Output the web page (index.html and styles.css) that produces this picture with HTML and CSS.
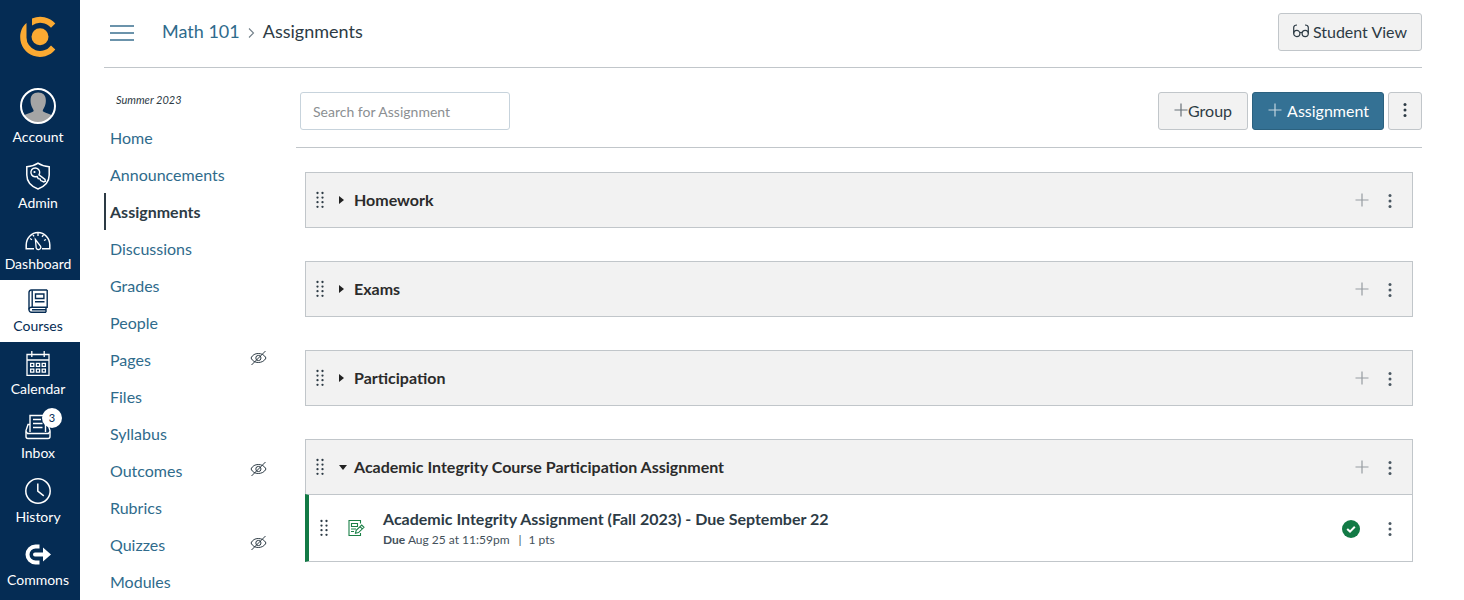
FILE: index.html
```html
<!DOCTYPE html>
<html lang="en">
    <head>
        <meta charset="UTF-8" />
        <meta name="viewport" content="width=device-width, initial-scale=1.0" />
        <title>Assignments</title>
        <link rel="stylesheet" href="styles.css">
    </head>
    <body>
        <!-- shared icons -->
        <svg class="sprite" aria-hidden="true">
            <symbol id="drag" viewBox="0 0 8 18">
                <g fill="#2d3b45">
                    <circle cx="1.5" cy="2" r="1.15" /><circle cx="6.5" cy="2" r="1.15" />
                    <circle cx="1.5" cy="6.6" r="1.15" /><circle cx="6.5" cy="6.6" r="1.15" />
                    <circle cx="1.5" cy="11.2" r="1.15" /><circle cx="6.5" cy="11.2" r="1.15" />
                    <circle cx="1.5" cy="15.8" r="1.15" /><circle cx="6.5" cy="15.8" r="1.15" />
                </g>
            </symbol>
            <symbol id="plus" viewBox="0 0 14 14">
                <path d="M7 .5v13M.5 7h13" fill="none" stroke="currentColor" stroke-width="1.2" />
            </symbol>
            <symbol id="more" viewBox="0 0 4 16">
                <circle cx="2" cy="2.4" r="1.5" fill="currentColor" />
                <circle cx="2" cy="8" r="1.5" fill="currentColor" />
                <circle cx="2" cy="13.6" r="1.5" fill="currentColor" />
            </symbol>
            <symbol id="hidden" viewBox="0 0 17 16">
                <g fill="none" stroke="#2d3b45" stroke-width="1">
                    <path d="M1 8C2.500 4.800 5.300 3.500 8.300 3.500S14.500 4.800 16 8C14.500 11.200 11.300 12.500 8.300 12.500S2.500 11.200 1 8z" />
                    <circle cx="8.400" cy="8" r="2.600" />
                    <path d="M1.500 15L15.500 1" />
                </g>
            </symbol>
        </svg>

        <div class="app">
            <nav class="global-nav" aria-label="Global">
                <a class="logo" href="#" aria-label="Home page">
                    <svg width="38" height="42" viewBox="0 0 38 42">
                        <circle cx="21" cy="20.700" r="8.500" fill="#fcaa32" />
                        <path d="M13 2.500A20 20 0 0 1 36.300 7.500L32 11.800A14 14 0 0 0 13 9.500z" fill="#fcaa32" />
                        <path d="M7.500 7V21A13.600 13.600 0 0 0 32 29.500L36.300 33.500A19.700 19.700 0 0 1 1.200 21C1.200 15.500 3.500 10 7.500 7z" fill="#fcaa32" />
                    </svg>
                </a>
                <ul>
                    <li><a href="#">
                        <svg width="36" height="36" viewBox="0 0 36 36">
                            <circle cx="18" cy="18" r="17" fill="#052c54" />
                            <path d="M4 27.500C6.500 25.300 12 24.800 13.500 23.200C14.300 22 11.500 20 10.800 15.500C9.600 8.500 12.500 4.500 18.200 4.500S26.800 8.500 25.600 15.500C24.900 20 22.100 22 22.900 23.200C24.400 24.800 29.500 25.300 32 27.500A17 17 0 0 1 4 27.500z" fill="#a5a5a5" />
                            <circle cx="18" cy="18" r="17" fill="none" stroke="#fff" stroke-width="2" />
                        </svg>
                        Account</a></li>
                    <li><a href="#">
                        <svg width="26" height="28" viewBox="0 0 26 28" fill="none" stroke="#fff" stroke-width="1.500">
                            <path d="M13 1.200C16 3.300 20 4.500 24.200 4.800V13C24.200 19.500 19.500 24.500 13 27C6.500 24.500 1.800 19.500 1.800 13V4.800C6 4.500 10 3.300 13 1.200z" />
                            <path d="M14 12.800A4.400 4.400 0 1 0 10 14.800L12.200 14.600L13.200 16.600L15 16.800L15.700 18.600L18.800 20L20.300 19.400L20 17.400z" stroke-width="1.400" />
                            <circle cx="9.500" cy="10" r="1.100" fill="#fff" stroke="none" />
                        </svg>
                        Admin</a></li>
                    <li><a href="#">
                        <svg width="26" height="23" viewBox="0 0 26 23" fill="none" stroke="#fff" stroke-width="1.500">
                            <path d="M9 20.800H1.200V17A11.800 12.500 0 0 1 24.800 17V20.800H17" />
                            <path d="M10.400 11.500L15.600 18.400A2.300 2.300 0 0 1 11.200 20z" stroke-width="1.300" />
                            <path d="M13 5v3M5 10.500l2 1.200M8 6.800l1 1.600M18.500 7l-1.500 1.700M21 11.500l-2 1" stroke-width="1.300" />
                        </svg>
                        Dashboard</a></li>
                    <li class="active"><a href="#">
                        <svg width="20" height="24" viewBox="0 0 20 24" fill="none" stroke="#052c54" stroke-width="1.400">
                            <path d="M19.200 1H3.500A2.600 2.600 0 0 0 1 3.600V20.600A2.500 2.500 0 0 0 3.500 23.200H18" />
                            <path d="M19.200 1V18.200H3.500A2.400 2.400 0 0 0 1 20.600M4.200 1.200V18M18 18.200V23.200M4 20.700H18" />
                            <path d="M7.500 5h8.400v4.500H7.500zM7 12.700h9.500" />
                        </svg>
                        Courses</a></li>
                    <li><a href="#">
                        <svg width="24" height="25" viewBox="0 0 24 25" fill="none" stroke="#fff" stroke-width="1.300">
                            <path d="M1 3.500H23V24.300H1zM1 9H23M5.800 0V6M18.200 0V6" />
                            <path d="M4.600 12.300h3.200v3H4.600zM10.400 12.300h3.200v3h-3.200zM16.200 12.300h3.200v3h-3.200zM4.600 18.200h3.200v3H4.600zM10.400 18.200h3.200v3h-3.200zM16.200 18.200h3.200v3h-3.200z" />
                        </svg>
                        Calendar</a></li>
                    <li><a href="#">
                        <svg width="26" height="26" viewBox="0 0 26 26" fill="none" stroke="#fff" stroke-width="1.400">
                            <path d="M5 18V1.500H20.500V18M8 5.500H16M8 9.500H17.500M8 13.500H17.500" />
                            <path d="M5 10.500H3L1 16.500V22.500A2 2 0 0 0 3 24.500H23A2 2 0 0 0 25 22.500V16.500L23 10.500H20.500" />
                            <path d="M1 17.500L2.500 19.500H23.500L25 17.500" />
                        </svg>
                        Inbox
                        <span class="badge">3</span></a></li>
                    <li><a href="#">
                        <svg width="26" height="26" viewBox="0 0 26 26" fill="none" stroke="#fff" stroke-width="1.500">
                            <circle cx="13" cy="13" r="12.200" />
                            <path d="M12.800 5.500V13.200L18.800 17.800" />
                        </svg>
                        History</a></li>
                    <li><a href="#">
                        <svg width="26" height="25" viewBox="0 0 26 25">
                            <path d="M14.500 4.500H10.500A7.800 7.800 0 0 0 10.500 20.500H14.500" fill="none" stroke="#fff" stroke-width="4" />
                            <path d="M10 10.500h8V5.500l8 7-8 7v-5h-8a2 2 0 0 1 0-4z" fill="#fff" />
                        </svg>
                        Commons</a></li>
                </ul>
            </nav>

            <div class="page">
                <header class="top">
                    <button class="menu-toggle" type="button" aria-label="Course menu">
                        <svg width="24" height="18" viewBox="0 0 24 18"><path d="M0 2h24M0 9h24M0 16h24" stroke="#6b93ab" stroke-width="2" /></svg>
                    </button>
                    <nav class="crumbs" aria-label="Breadcrumbs">
                        <a href="#">Math 101</a>
                        <svg width="7" height="10" viewBox="0 0 7 10"><path d="M1 .5L5.500 5L1 9.500" fill="none" stroke="#73808a" stroke-width="1.100" /></svg>
                        <span>Assignments</span>
                    </nav>
                    <button class="btn btn-view" type="button">
                        <svg width="16" height="14" viewBox="0 0 16 14" fill="none" stroke="#2d3b45" stroke-width="1.200">
                            <circle cx="3.800" cy="9.500" r="3.100" /><circle cx="12.200" cy="9.500" r="3.100" />
                            <path d="M.700 9.500V3.500Q.700 1 4 1M15.300 9.500V3.500Q15.300 1 12 1M6.800 8.800Q8 8 9.200 8.800" />
                        </svg>
                        Student View
                    </button>
                </header>

                <div class="columns">
                    <aside class="course-menu">
                        <p class="term">Summer 2023</p>
                        <ul>
                            <li><a href="#">Home</a></li>
                            <li><a href="#">Announcements</a></li>
                            <li class="active"><a href="#">Assignments</a></li>
                            <li><a href="#">Discussions</a></li>
                            <li><a href="#">Grades</a></li>
                            <li><a href="#">People</a></li>
                            <li><a href="#">Pages <svg width="17" height="16"><use href="#hidden" /></svg></a></li>
                            <li><a href="#">Files</a></li>
                            <li><a href="#">Syllabus</a></li>
                            <li><a href="#">Outcomes <svg width="17" height="16"><use href="#hidden" /></svg></a></li>
                            <li><a href="#">Rubrics</a></li>
                            <li><a href="#">Quizzes <svg width="17" height="16"><use href="#hidden" /></svg></a></li>
                            <li><a href="#">Modules</a></li>
                        </ul>
                    </aside>

                    <main>
                        <div class="toolbar">
                            <input class="search" type="text" placeholder="Search for Assignment" aria-label="Search for Assignment" />
                            <button class="btn btn-group" type="button"><svg width="14" height="14"><use href="#plus" /></svg>Group</button>
                            <button class="btn btn-primary" type="button"><svg width="14" height="14"><use href="#plus" /></svg>Assignment</button>
                            <button class="btn btn-more" type="button" aria-label="Assignments settings"><svg width="4" height="16"><use href="#more" /></svg></button>
                        </div>

                        <div class="groups">
                            <section class="group">
                                <div class="group-head">
                                    <svg width="8" height="18"><use href="#drag" /></svg>
                                    <h2><button type="button" aria-expanded="false"><span class="arrow"></span>Homework</button></h2>
                                    <button class="icon-btn add" type="button" aria-label="Add to Homework"><svg width="14" height="14"><use href="#plus" /></svg></button>
                                    <button class="icon-btn" type="button" aria-label="Homework settings"><svg width="4" height="16"><use href="#more" /></svg></button>
                                </div>
                            </section>
                            <section class="group">
                                <div class="group-head">
                                    <svg width="8" height="18"><use href="#drag" /></svg>
                                    <h2><button type="button" aria-expanded="false"><span class="arrow"></span>Exams</button></h2>
                                    <button class="icon-btn add" type="button" aria-label="Add to Exams"><svg width="14" height="14"><use href="#plus" /></svg></button>
                                    <button class="icon-btn" type="button" aria-label="Exams settings"><svg width="4" height="16"><use href="#more" /></svg></button>
                                </div>
                            </section>
                            <section class="group">
                                <div class="group-head">
                                    <svg width="8" height="18"><use href="#drag" /></svg>
                                    <h2><button type="button" aria-expanded="false"><span class="arrow"></span>Participation</button></h2>
                                    <button class="icon-btn add" type="button" aria-label="Add to Participation"><svg width="14" height="14"><use href="#plus" /></svg></button>
                                    <button class="icon-btn" type="button" aria-label="Participation settings"><svg width="4" height="16"><use href="#more" /></svg></button>
                                </div>
                            </section>
                            <section class="group open">
                                <div class="group-head">
                                    <svg width="8" height="18"><use href="#drag" /></svg>
                                    <h2><button type="button" aria-expanded="true"><span class="arrow"></span>Academic Integrity Course Participation Assignment</button></h2>
                                    <button class="icon-btn add" type="button" aria-label="Add to group"><svg width="14" height="14"><use href="#plus" /></svg></button>
                                    <button class="icon-btn" type="button" aria-label="Group settings"><svg width="4" height="16"><use href="#more" /></svg></button>
                                </div>
                                <div class="item">
                                    <svg width="8" height="18"><use href="#drag" /></svg>
                                    <svg class="doc" width="17" height="18" viewBox="0 0 17 18" fill="none" stroke="#1b8047" stroke-width="1.100">
                                        <path d="M12.500 4.500V1.500H1V16.500H12.500V14M3.500 4.500h6v3h-6zM3 10h5M3 12.500h3" />
                                        <path d="M7.500 14.200L8.200 11.300L13.700 6L16 8.300L10.500 13.600zM12 7.600L14.300 9.900" />
                                    </svg>
                                    <div class="info">
                                        <a class="name" href="#">Academic Integrity Assignment (Fall 2023) - Due September 22</a>
                                        <div class="details"><span><b>Due</b> Aug 25 at 11:59pm</span><span class="pts">1 pts</span></div>
                                    </div>
                                    <button class="icon-btn" type="button" aria-label="Published">
                                        <svg width="18" height="18" viewBox="0 0 18 18"><circle cx="9" cy="9" r="9" fill="#127a45" /><path d="M5.200 9L8 11.600L12.800 6.800" fill="none" stroke="#fff" stroke-width="2" /></svg>
                                    </button>
                                    <button class="icon-btn" type="button" aria-label="Assignment settings"><svg width="4" height="16"><use href="#more" /></svg></button>
                                </div>
                            </section>
                        </div>
                    </main>
                </div>
            </div>
        </div>
    </body>
</html>
```

FILE: styles.css
```css
* {
    box-sizing: border-box;
}
body {
    margin: 0;
    font-family: Lato, "Liberation Sans", sans-serif;
    font-size: 16px;
    color: #2d3b45;
    background: #fff;
}
ul {
    list-style: none;
    margin: 0;
    padding: 0;
}
a {
    color: #2f6b8c;
    text-decoration: none;
}
button,
input {
    font-family: inherit;
    font-size: 16px;
    color: inherit;
}
button {
    padding: 0;
    border: 0;
    background: none;
    cursor: pointer;
}
svg {
    display: block;
    flex: none;
}
.sprite {
    display: none;
}
.app {
    display: flex;
    min-height: 100vh;
}

/* global navigation */
.global-nav {
    width: 80px;
    flex: none;
    background: #052c54;
}
.logo {
    display: flex;
    justify-content: center;
    padding: 16px 4px 21px 0;
}
.global-nav li a {
    position: relative;
    display: flex;
    flex-direction: column;
    align-items: center;
    gap: 4px;
    padding: 9px 4px 7px 0;
    font-size: 14px;
    line-height: 18px;
    color: #fff;
}
.global-nav .active a {
    background: #fff;
    color: #052c54;
}
.badge {
    position: absolute;
    top: 3px;
    left: 42px;
    width: 20px;
    height: 20px;
    border-radius: 50%;
    background: #fff;
    color: #052c54;
    font-size: 11px;
    line-height: 20px;
    text-align: center;
}

/* header */
.page {
    flex: 1;
    min-width: 0;
    padding: 0 42px 0 24px;
}
.top {
    display: flex;
    align-items: center;
    height: 68px;
    padding: 0 0 3px 6px;
    border-bottom: 1px solid #c1c6ca;
}
.menu-toggle {
    margin-right: 28px;
    padding-top: 2px;
}
.crumbs {
    display: flex;
    flex: 1;
    align-items: center;
    gap: 8px;
    padding-bottom: 2px;
    font-size: 18px;
    line-height: 24px;
}
.crumbs svg {
    margin-top: 4px;
}
.btn {
    display: flex;
    align-items: center;
    justify-content: center;
    gap: 5px;
    height: 38px;
    padding: 0 14px 2px;
    border: 1px solid #c1c6ca;
    border-radius: 3px;
    background: #f2f2f2;
}
.btn-view {
    gap: 4px;
}

/* course menu */
.columns {
    display: flex;
}
.course-menu {
    width: 192px;
    flex: none;
    padding-top: 24px;
}
.term {
    margin: 0 0 11px;
    padding-left: 12px;
    font-size: 11px;
    line-height: 16px;
    font-style: italic;
}
.course-menu li a {
    display: flex;
    align-items: center;
    justify-content: space-between;
    padding: 0 29px 0 4px;
    border-left: 2px solid transparent;
    line-height: 37px;
}
.course-menu svg {
    margin-bottom: 4px;
}
.course-menu .active a {
    border-color: #2d3b45;
    color: #2d3b45;
    font-weight: bold;
}

/* toolbar */
main {
    flex: 1;
    min-width: 0;
}
.toolbar {
    display: flex;
    gap: 4px;
    padding: 24px 0 17px 4px;
    border-bottom: 1px solid #c1c6ca;
}
.search {
    width: 210px;
    height: 38px;
    margin-right: auto;
    padding: 0 12px;
    border: 1px solid #c7d3dc;
    border-radius: 3px;
    font-size: 14px;
}
.search::placeholder {
    color: #8b8f92;
}
.btn-group {
    gap: 0;
    padding: 0 15px 2px;
}
.toolbar .btn svg {
    opacity: 0.7;
}
.btn-primary {
    padding-left: 15px;
    border-color: #2b617f;
    background: #347194;
    color: #fff;
}
.toolbar .btn-more svg {
    opacity: 1;
}

/* assignment groups */
.groups {
    display: flex;
    flex-direction: column;
    gap: 33px;
    padding: 24px 9px 0;
}
.group-head {
    display: flex;
    align-items: center;
    height: 56px;
    padding: 0 8px 0 10px;
    border: 1px solid #c1c6ca;
    background: #f2f2f2;
}
.group-head h2 {
    flex: 1;
    margin: 0 0 2px 15px;
    font-size: 16px;
    line-height: 24px;
}
.group-head h2 button {
    display: flex;
    align-items: center;
    font-weight: bold;
    color: #2b2b2b;
}
.arrow {
    width: 5px;
    margin: 2px 10px 0 0;
    border: solid transparent;
    border-width: 4px 0 4px 5px;
    border-left-color: #222;
}
.open .arrow {
    width: 8px;
    margin-right: 7px;
    border-width: 5px 4px 0;
    border-color: #222 transparent transparent;
}
.icon-btn {
    display: flex;
    align-items: center;
    justify-content: center;
    width: 28px;
    height: 28px;
    padding-top: 2px;
    color: #4b5862;
}
.add {
    padding-top: 0;
    color: #969ca1;
}
.open .group-head {
    height: 55px;
    border-bottom: 0;
}
.item {
    display: flex;
    align-items: center;
    height: 68px;
    padding: 0 8px 0 11px;
    border: 1px solid #c1c6ca;
    border-left: 4px solid #127a45;
}
.doc {
    margin: 0 18px 0 20px;
}
.info {
    flex: 1;
    padding-top: 2px;
}
.item .icon-btn {
    margin-left: 11px;
}
.name {
    display: block;
    font-weight: bold;
    line-height: 22px;
    color: #2d3b45;
}
.details {
    display: flex;
    gap: 9px;
    font-size: 12px;
    line-height: 20px;
    color: #44515b;
}
.pts {
    display: flex;
    gap: 7px;
}
.pts::before {
    content: "|";
}
```
